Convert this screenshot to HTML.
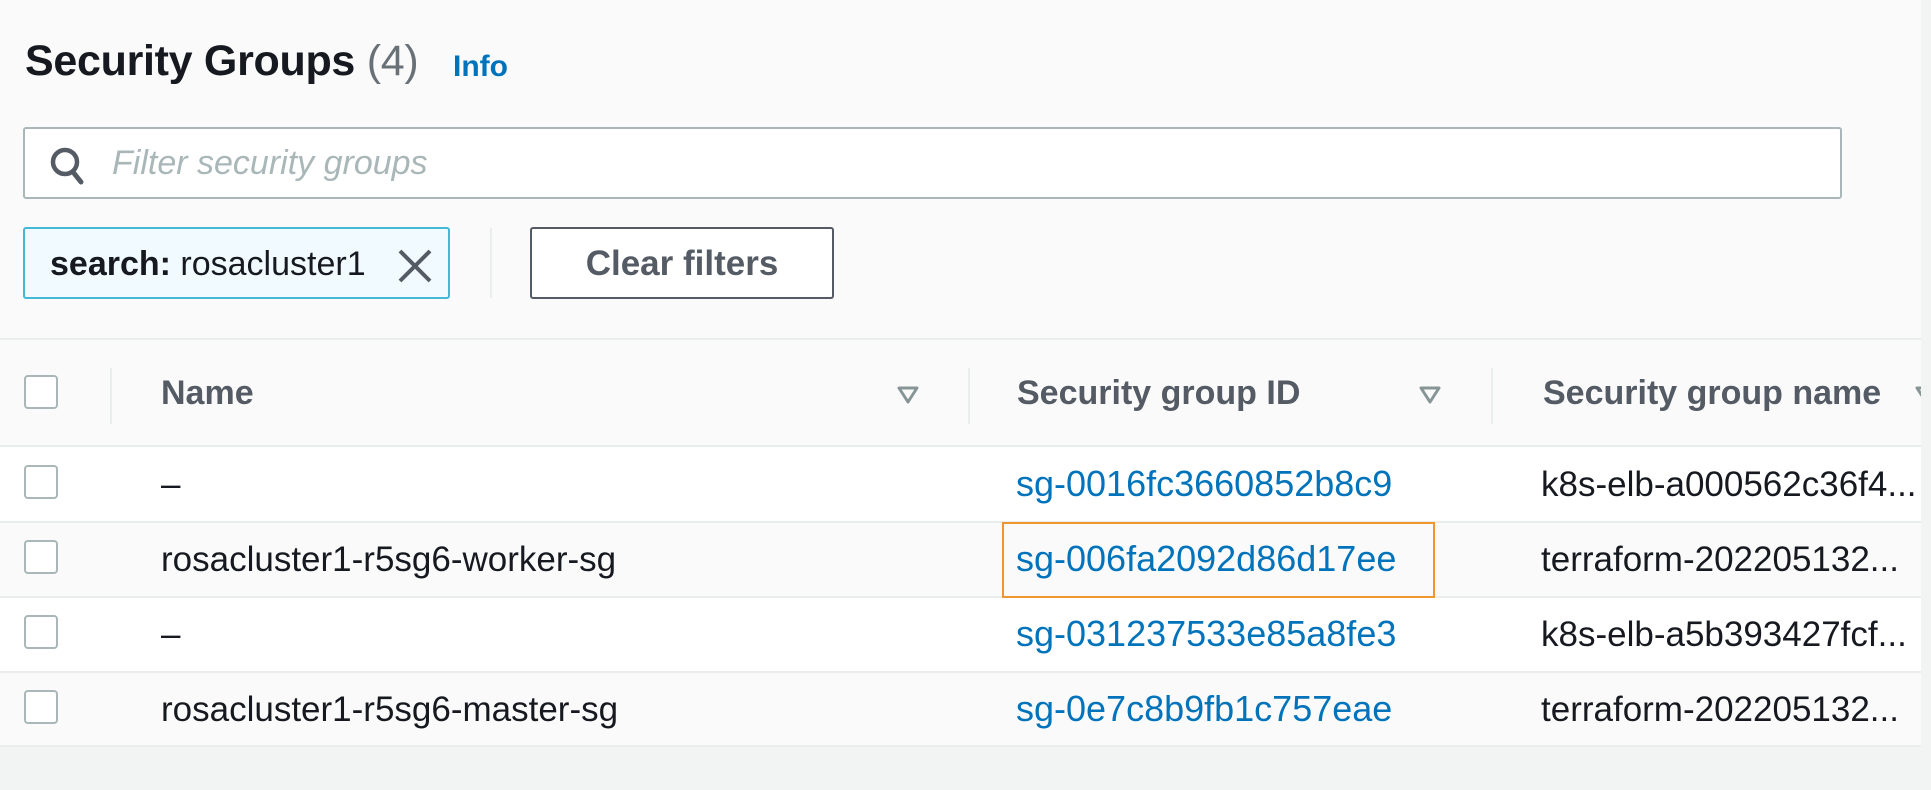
<!DOCTYPE html>
<html><head><meta charset="utf-8"><style>
*{margin:0;padding:0;box-sizing:border-box}
body{width:1931px;height:790px;background:#fafafa;font-family:"Liberation Sans",sans-serif;position:relative;overflow:hidden;color:#16191f}
.a{position:absolute}
.t{font-size:35px;white-space:nowrap;line-height:1}
.cb{position:absolute;left:24px;width:34px;height:34px;border:2px solid #aab7b8;border-radius:4px;background:#fff}
.hd{font-weight:bold;color:#545b64;font-size:34px}
.lk{color:#0073bb;font-size:36px}
.nm{width:378px;overflow:hidden}
</style></head><body>
<div class="a t" style="left:25px;top:40px;font-size:43px;font-weight:bold;letter-spacing:-0.3px">Security Groups <span style="font-weight:normal;color:#687078">(4)</span></div>
<div class="a t" style="left:453px;top:52px;font-size:30px;font-weight:bold;color:#0073bb">Info</div>

<div class="a" style="left:23px;top:127px;width:1819px;height:72px;background:#fff;border:2px solid #aab7b8;border-radius:3px"></div>
<svg class="a" style="left:48px;top:145px" width="40" height="42" viewBox="0 0 40 42"><circle cx="17" cy="17" r="12" fill="none" stroke="#545b64" stroke-width="4.5"/><path d="M25 27 L33 37" stroke="#545b64" stroke-width="5" stroke-linecap="round"/></svg>
<div class="a t" style="left:112px;top:146px;font-style:italic;color:#aab7b8;font-size:34px">Filter security groups</div>

<div class="a" style="left:23px;top:227px;width:427px;height:72px;background:#f1faff;border:2px solid #44b9d6;border-radius:3px"></div>
<div class="a t" style="left:50px;top:247px;font-size:34px"><b>search:</b> rosacluster1</div>
<svg class="a" style="left:396px;top:247px" width="38" height="38" viewBox="0 0 38 38"><path d="M4 4 L34 34 M34 4 L4 34" stroke="#545b64" stroke-width="4"/></svg>
<div class="a" style="left:490px;top:228px;width:2px;height:70px;background:#eaeded"></div>
<div class="a" style="left:530px;top:227px;width:304px;height:72px;background:#fff;border:2px solid #545b64;border-radius:3px"></div>
<div class="a t" style="left:530px;top:246px;width:304px;text-align:center;font-weight:bold;color:#545b64;font-size:35px">Clear filters</div>

<div class="a" style="left:0;top:338px;width:1921px;height:2px;background:#eaeded"></div>
<div class="a" style="left:0;top:340px;width:1921px;height:106px;background:#fafafa"></div>
<div class="a" style="left:0;top:446px;width:1921px;height:300px;background:#fff"></div>
<div class="a" style="left:0;top:522px;width:1921px;height:75px;background:#fafafa"></div>
<div class="a" style="left:0;top:672px;width:1921px;height:74px;background:#fafafa"></div>
<div class="a" style="left:0;top:445px;width:1921px;height:2px;background:#eaeded"></div>
<div class="a" style="left:0;top:521px;width:1921px;height:2px;background:#eaeded"></div>
<div class="a" style="left:0;top:596px;width:1921px;height:2px;background:#eaeded"></div>
<div class="a" style="left:0;top:671px;width:1921px;height:2px;background:#eaeded"></div>
<div class="a" style="left:0;top:745px;width:1931px;height:2px;background:#eaeded"></div>
<div class="a" style="left:0;top:747px;width:1931px;height:43px;background:#f2f3f3"></div>

<div class="a" style="left:110px;top:368px;width:2px;height:56px;background:#eaeded"></div>
<div class="a" style="left:968px;top:368px;width:2px;height:56px;background:#eaeded"></div>
<div class="a" style="left:1491px;top:368px;width:2px;height:56px;background:#eaeded"></div>

<div class="cb" style="top:375px"></div>
<div class="a t hd" style="left:161px;top:376px">Name</div>
<svg class="a" style="left:896px;top:385px" width="24" height="20" viewBox="0 0 24 20"><path d="M3 3 L21 3 L12 17 Z" fill="none" stroke="#879596" stroke-width="3" stroke-linejoin="round"/></svg>
<div class="a t hd" style="left:1017px;top:376px">Security group ID</div>
<svg class="a" style="left:1418px;top:385px" width="24" height="20" viewBox="0 0 24 20"><path d="M3 3 L21 3 L12 17 Z" fill="none" stroke="#879596" stroke-width="3" stroke-linejoin="round"/></svg>
<div class="a t hd" style="left:1543px;top:376px">Security group name</div>
<svg class="a" style="left:1914px;top:385px" width="24" height="20" viewBox="0 0 24 20"><path d="M3 3 L21 3 L12 17 Z" fill="none" stroke="#879596" stroke-width="3" stroke-linejoin="round"/></svg>

<div class="cb" style="top:465px"></div>
<div class="a t" style="left:161px;top:467px">–</div>
<div class="a t lk" style="left:1016px;top:466px">sg-0016fc3660852b8c9</div>
<div class="a t nm" style="left:1541px;top:467px">k8s-elb-a000562c36f4...</div>

<div class="cb" style="top:540px"></div>
<div class="a t" style="left:161px;top:542px">rosacluster1-r5sg6-worker-sg</div>
<div class="a" style="left:1002px;top:522px;width:433px;height:76px;border:2px solid #f0962e"></div>
<div class="a t lk" style="left:1016px;top:541px">sg-006fa2092d86d17ee</div>
<div class="a t nm" style="left:1541px;top:542px">terraform-202205132...</div>

<div class="cb" style="top:615px"></div>
<div class="a t" style="left:161px;top:617px">–</div>
<div class="a t lk" style="left:1016px;top:616px">sg-031237533e85a8fe3</div>
<div class="a t nm" style="left:1541px;top:617px">k8s-elb-a5b393427fcf...</div>

<div class="cb" style="top:690px"></div>
<div class="a t" style="left:161px;top:692px">rosacluster1-r5sg6-master-sg</div>
<div class="a t lk" style="left:1016px;top:691px">sg-0e7c8b9fb1c757eae</div>
<div class="a t nm" style="left:1541px;top:692px">terraform-202205132...</div>
<div class="a" style="left:1921px;top:0;width:10px;height:790px;background:#f2f3f3"></div>
</body></html>
